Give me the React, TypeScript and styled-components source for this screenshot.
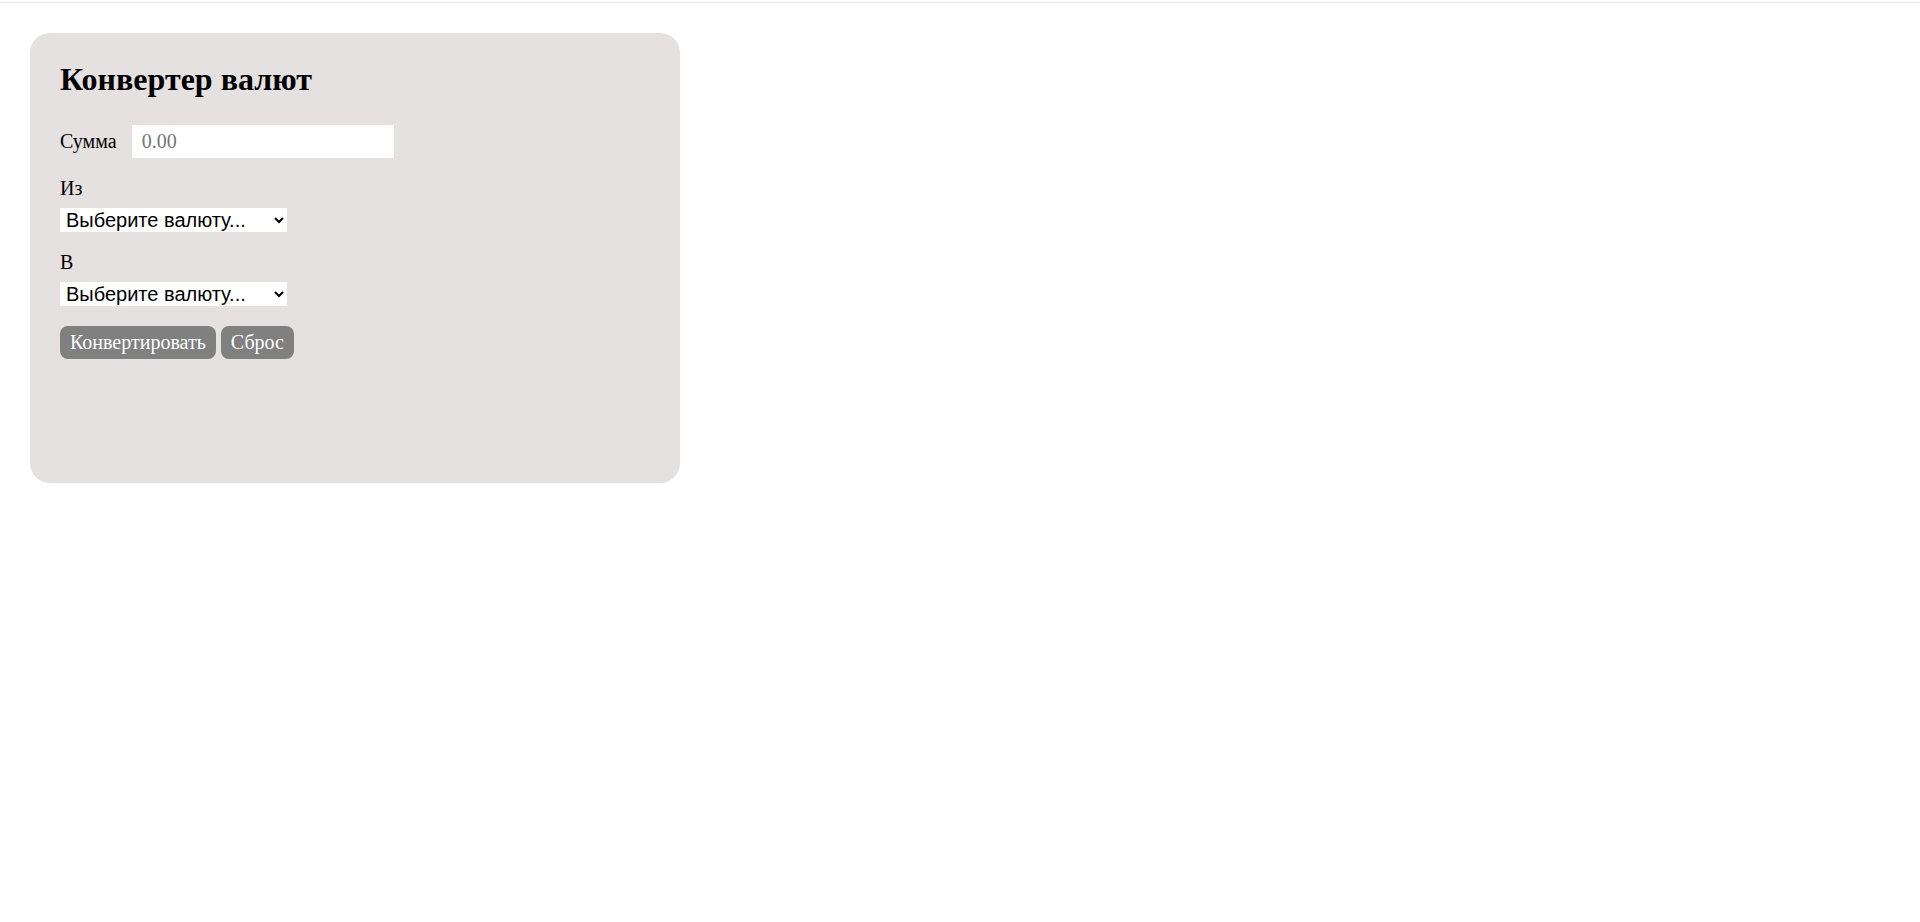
import { FunctionComponent, useState } from 'react'
import { styled, createGlobalStyle } from 'styled-components'

const currencies = ['USD', 'EUR', 'RUB', 'GBP', 'CNY', 'JPY']

const App: FunctionComponent = () => {
  const [amount, setAmount] = useState<string>('')
  const [from, setFrom] = useState<string>('')
  const [to, setTo] = useState<string>('')

  const handleOnReset = () => {
    setAmount('')
    setFrom('')
    setTo('')
  }

  return (
    <>
      <GlobalStyle />
      <Page>
        <TopRule />
        <Card>
          <Title>Конвертер валют</Title>
          <AmountRow>
            <Label htmlFor='amount'>Сумма</Label>
            <AmountInput
              id='amount'
              type='text'
              placeholder='0.00'
              value={amount}
              onChange={(e) => setAmount(e.target.value)}
            />
          </AmountRow>
          <Field>
            <Label htmlFor='from'>Из</Label>
            <CurrencySelect id='from' value={from} onChange={(e) => setFrom(e.target.value)}>
              <option value=''>Выберите валюту...</option>
              {currencies.map((c) => (
                <option key={c} value={c}>{c}</option>
              ))}
            </CurrencySelect>
          </Field>
          <Field>
            <Label htmlFor='to'>В</Label>
            <CurrencySelect id='to' value={to} onChange={(e) => setTo(e.target.value)}>
              <option value=''>Выберите валюту...</option>
              {currencies.map((c) => (
                <option key={c} value={c}>{c}</option>
              ))}
            </CurrencySelect>
          </Field>
          <Actions>
            <Button type='button'>Конвертировать</Button>
            <Button type='button' onClick={() => handleOnReset()}>Сброс</Button>
          </Actions>
        </Card>
      </Page>
    </>
  )
}
export default App

const GlobalStyle = createGlobalStyle`
  body {
    margin: 0;
    background: #ffffff;
    font-family: 'Liberation Serif', 'Times New Roman', serif;
    color: #000000;
  }
`

const Page = styled.div`
  padding-top: 2px;
`

const TopRule = styled.div`
  height: 1px;
  background-color: #e8e8e8;
`

const Card = styled.div`
  box-sizing: border-box;
  width: 650px;
  height: 450px;
  margin: 30px 0 0 30px;
  padding: 28px 30px;
  background-color: #e5e1e1;
  border-radius: 20px;
`

const Title = styled.h1`
  margin: 0 0 27px;
  font-size: 32px;
  font-weight: bold;
`

const AmountRow = styled.div`
  display: flex;
  align-items: center;
  gap: 15px;
`

const Label = styled.label`
  display: block;
  font-size: 20px;
`

const AmountInput = styled.input`
  box-sizing: border-box;
  width: 262px;
  height: 33px;
  padding: 0 10px;
  border: none;
  outline: none;
  background-color: #ffffff;
  font-family: 'Liberation Serif', 'Times New Roman', serif;
  font-size: 20px;

  &::placeholder {
    color: #757575;
  }
`

const Field = styled.div`
  display: flex;
  flex-direction: column;
  align-items: flex-start;
  gap: 8px;
  margin-top: 19px;
`

const CurrencySelect = styled.select`
  box-sizing: border-box;
  width: 227px;
  height: 24px;
  padding: 0 2px;
  border: none;
  border-radius: 0;
  background-color: #ffffff;
  font-family: 'Liberation Sans', Arial, sans-serif;
  font-size: 20px;
  color: #000000;
`

const Actions = styled.div`
  display: flex;
  gap: 5px;
  margin-top: 20px;
`

const Button = styled.button`
  cursor: pointer;
  height: 33px;
  padding: 0 10px;
  border: none;
  border-radius: 8px;
  background-color: #808080;
  color: #ffffff;
  font-family: 'Liberation Serif', 'Times New Roman', serif;
  font-size: 20px;
`
